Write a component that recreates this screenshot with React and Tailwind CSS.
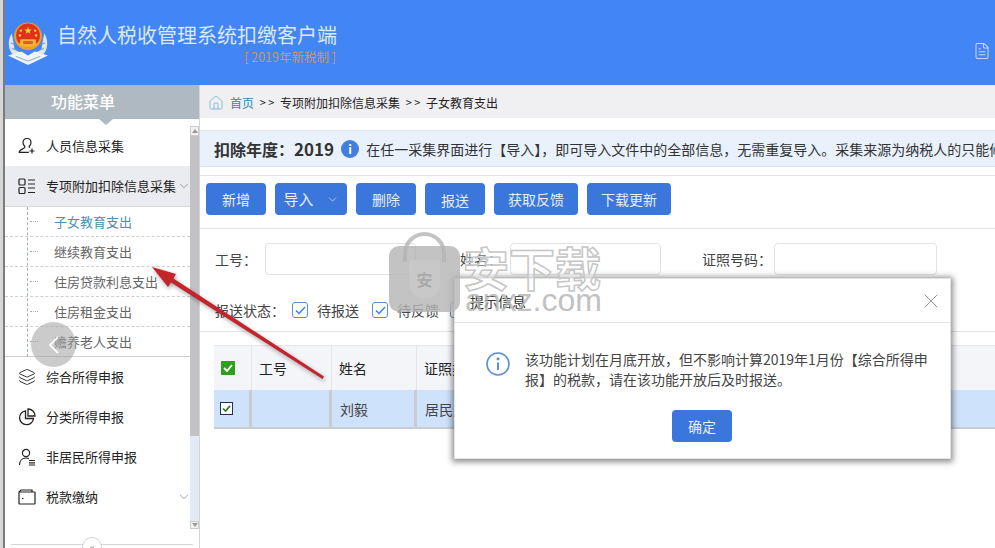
import React from "react";
import { Home, FileText, ChevronDown, Layers, X } from "lucide-react";

function Emblem() {
  return (
    <svg width="40" height="44" viewBox="0 0 42 46" className="shrink-0">
      <path d="M4 13 C-1 20 0 31 6 36 L13 39 L21 41 L29 39 L36 36 C42 31 43 20 38 13 L35 30 L21 37 L7 30 Z" fill="#dfe6ee" />
      <g stroke="#7f93ad" strokeWidth="1" fill="none">
        <path d="M5 17 l4 3 M3 23 l5 2 M4 29 l5 1 M37 17 l-4 3 M39 23 l-5 2 M38 29 l-5 1" />
      </g>
      <path d="M0 36 L14 32 L21 36 L28 32 L42 36 L21 46 Z" fill="#f0f4f9" />
      <path d="M8 37 L21 42 L34 37" stroke="#8ea3bf" strokeWidth="1" fill="none" />
      <circle cx="21" cy="16" r="14.5" fill="#f0a020" />
      <circle cx="21" cy="15" r="12.5" fill="#e0301e" />
      <path d="M21 6 l1 2.8 3 0 -2.4 1.8 .9 2.8 -2.5 -1.7 -2.5 1.7 .9 -2.8 -2.4 -1.8 3 0 Z" fill="#fbd92f" />
      <g fill="#fbd92f">
        <circle cx="13.5" cy="10" r="1.3" />
        <circle cx="12.5" cy="15" r="1.3" />
        <circle cx="28.5" cy="10" r="1.3" />
        <circle cx="29.5" cy="15" r="1.3" />
      </g>
      <path d="M13 19 h16 l1 6 q-9 5 -18 0 Z" fill="#f5b335" />
      <path d="M16 21 h10 v3 h-10 Z" fill="#d8601f" />
    </svg>
  );
}

function IconUserPlus() {
  return (
    <svg width="18" height="18" viewBox="0 0 18 18" fill="none" stroke="#222" strokeWidth="1.2">
      <path d="M9 1.5 c-2.6 0 -4 1.9 -4 4 c0 1.8 .8 3 1.8 3.8 c.3 1 -.3 1.7 -1.5 2.2 c-2 .8 -4 1.5 -4 3.8 h9.5" />
      <path d="M9 1.5 c2.6 0 4 1.9 4 4 c0 1.8 -.8 3 -1.8 3.8 c-.2 .7 0 1.2 .5 1.6" />
      <path d="M14 11.5 v5 M11.5 14 h5" />
    </svg>
  );
}
function IconList() {
  return (
    <svg width="18" height="18" viewBox="0 0 18 18" fill="none" stroke="#222" strokeWidth="1.2">
      <rect x="1" y="2" width="6" height="6" rx="1" />
      <rect x="1" y="10.5" width="6" height="6" rx="1" />
      <path d="M10 3h7M10 7h7M10 11h7M10 15.5h7" />
    </svg>
  );
}
function IconPie() {
  return (
    <svg width="18" height="18" viewBox="0 0 18 18" fill="none" stroke="#222" strokeWidth="1.3">
      <path d="M7.5 2.8 A7 7 0 1 0 15.5 10.5 H7.5 Z" />
      <path d="M10 1 A7 7 0 0 1 17 8 H10 Z" />
    </svg>
  );
}
function IconUserLines() {
  return (
    <svg width="18" height="18" viewBox="0 0 18 18" fill="none" stroke="#222" strokeWidth="1.2">
      <circle cx="8" cy="5" r="3.6" />
      <path d="M1.5 17 c0 -4.5 3 -7 6.5 -7 c1 0 2 .2 2.8 .6" />
      <path d="M11 12.5h6M11 14.8h6M11 17h6" />
    </svg>
  );
}
function IconWallet() {
  return (
    <svg width="18" height="16" viewBox="0 0 18 16" fill="none" stroke="#222" strokeWidth="1.2">
      <path d="M1 3 L3 1 H14 V3" />
      <rect x="1" y="3" width="16" height="12" rx="0.5" />
      <path d="M4 9.5 h1.5" />
    </svg>
  );
}

function MenuItem({ icon, label, chevron, active }) {
  return (
    <div className={`h-10 flex items-center pl-[13px] text-[13px] text-[#222] relative ${active ? "bg-[#ebecf0]" : ""}`}>
      <span className="w-[28px] flex items-center">{icon}</span>
      <span className="whitespace-nowrap">{label}</span>
      {chevron && <ChevronDown className="absolute -right-[1px] text-[#777]" size={14} strokeWidth={1.2} />}
    </div>
  );
}

function SubItem({ label, active, last }) {
  return (
    <div className={`h-[30px] flex items-center text-[13px] border-b border-[#cfcfcf] ${last ? "border-solid" : "border-dashed"} ${active ? "text-[#4b8fb3]" : "text-[#666]"}`}>
      <span className="w-[8px] ml-[25px] mr-[16px] border-t border-dotted border-[#aaa]" />
      {label}
    </div>
  );
}

function Btn({ children, w, caret, cls = "" }) {
  return (
    <button className={`h-8 rounded-[4px] bg-[#3a76db] text-[#e8effb] text-sm flex items-center justify-center gap-3 ${w} ${cls}`}>
      {children}
      {caret && <ChevronDown size={13} strokeWidth={1.2} />}
    </button>
  );
}

function Check() {
  return (
    <span className="w-4 h-4 rounded-[3px] border border-[#5b8fd0] bg-white flex items-center justify-center">
      <svg width="11" height="9" viewBox="0 0 11 9" fill="none" stroke="#3f7fd8" strokeWidth="1.4"><path d="M1 4.5 L4 7.5 L10 1" /></svg>
    </span>
  );
}

export default function App() {
  return (
    <div className="w-[995px] h-[548px] border-l-[3px] border-l-[#d6d6d6] overflow-hidden">
      <div className="relative w-[992px] h-[548px] overflow-hidden bg-white flex flex-col [font-family:'Noto_Sans_CJK_SC','Liberation_Sans',sans-serif] text-[#333] border-l-2 border-l-[#7c7c7c]">
        {/* header */}
        <header className="h-[85px] shrink-0 bg-[#4285f4] flex items-center pl-[3px] pr-1 relative">
          <Emblem />
          <div className="ml-[9px] flex flex-col -mt-[1px]">
            <div className="text-[20px] leading-[28px] text-[#dbe8fd] whitespace-nowrap">自然人税收管理系统扣缴客户端</div>
            <div className="text-[12.5px] leading-[15px] text-[#c9995e] text-right pr-[1px]">[ 2019年新税制 ]</div>
          </div>
          <FileText className="ml-auto mt-[17px] text-[#c3d9fb]" size={18} strokeWidth={1.4} />
        </header>

        <div className="flex-1 flex min-h-0">
          {/* sidebar */}
          <aside className="w-[195px] shrink-0 flex flex-col border-r border-[#d5d5d5] relative">
            <div className="h-[34px] shrink-0 bg-[#aeb9c1] text-white text-base font-medium flex items-center pl-[46px] pb-[2px] relative">
              功能菜单
              <span className="absolute left-[94px] -bottom-[6px] w-0 h-0 border-x-[7px] border-x-transparent border-t-[6px] border-t-[#aeb9c1]" />
            </div>
            <div className="flex-1 flex min-h-0 pt-[7px]">
              <div className="w-[185px] shrink-0">
                <MenuItem icon={<IconUserPlus />} label="人员信息采集" />
                <MenuItem icon={<IconList />} label="专项附加扣除信息采集" chevron active />
                <div className="relative border-t border-[#d8d8d8]">
                  <span className="absolute left-[22px] top-0 bottom-0 border-l border-dashed border-[#9fb0c0]" />
                  <SubItem label="子女教育支出" active />
                  <SubItem label="继续教育支出" />
                  <SubItem label="住房贷款利息支出" />
                  <SubItem label="住房租金支出" />
                  <SubItem label="赡养老人支出" last />
                </div>
                <MenuItem icon={<Layers size={18} strokeWidth={1.2} color="#222" />} label="综合所得申报" />
                <MenuItem icon={<IconPie />} label="分类所得申报" />
                <MenuItem icon={<IconUserLines />} label="非居民所得申报" />
                <MenuItem icon={<IconWallet />} label="税款缴纳" chevron />
              </div>
              <div className="w-[9px] h-[403px] shrink-0 flex flex-col bg-[#e3e9f5]">
                <div className="h-[10px] bg-[#f1f1f1] border border-[#ccc] flex items-center justify-center">
                  <span className="w-0 h-0 border-x-[3px] border-x-transparent border-b-[4px] border-b-[#999]" />
                </div>
                <div className="h-[300px] bg-[#c2c2c6]" />
                <div className="flex-1" />
                <div className="h-[8px] bg-[#f1f1f1] border border-[#ccc] flex items-center justify-center">
                  <span className="w-0 h-0 border-x-[3px] border-x-transparent border-t-[4px] border-t-[#999]" />
                </div>
              </div>
            </div>
            <div className="absolute left-[6px] right-[6px] top-[459px] border-t border-[#d5d5d5]" />
            <div className="absolute left-[77px] top-[452px] w-5 h-5 rounded-full bg-white border border-[#d5d5d5] text-[#999] text-xs flex items-center justify-center leading-none">«</div>
          </aside>

          {/* main */}
          <main className="flex-1 min-w-0 overflow-hidden flex flex-col">
            <div className="h-[33px] shrink-0 bg-[#f0eff2] flex items-center pl-2 pt-[1px] text-xs text-[#222] whitespace-nowrap border-t border-[#e3eefb]">
              <Home size={16} strokeWidth={1} className="text-[#5ba3c9] mr-[6px]" />
              <span className="text-[#2e8ba6]">首页</span>
              <span className="mx-[5px] w-[16px] text-center text-[11px]">&gt; &gt;</span>
              <span>专项附加扣除信息采集</span>
              <span className="mx-[5px] w-[16px] text-center text-[11px]">&gt; &gt;</span>
              <span>子女教育支出</span>
            </div>
            <div className="h-[37px] mt-3 shrink-0 bg-[#e8f1fc] border-y border-[#dbe3ec] flex items-center pl-[14px] whitespace-nowrap">
              <span className="text-base font-bold text-[#333]">扣除年度：<span className="text-[17px]">2019</span></span>
              <span className="ml-[7px] w-[18px] h-[18px] rounded-full bg-[#3f7fe0] text-white text-xs font-bold flex items-center justify-center shrink-0">i</span>
              <span className="ml-[7px] text-sm text-[#333]">在任一采集界面进行【导入】，即可导入文件中的全部信息，无需重复导入。采集来源为纳税人的只能修改</span>
            </div>
            <div className="mt-2 h-[54px] shrink-0 border-y border-[#e2e2e2] flex gap-[9px] pl-[6px] pt-[7px]">
              <Btn w="w-[60px]">新增</Btn>
              <Btn w="w-[72px]" caret cls="text-[15px]">导入</Btn>
              <Btn w="w-[60px]">删除</Btn>
              <Btn w="w-[60px]" cls="pt-[2px]">报送</Btn>
              <Btn w="w-[84px]">获取反馈</Btn>
              <Btn w="w-[84px]">下载更新</Btn>
            </div>
            <div className="mt-[14px] h-8 shrink-0 flex items-center text-sm text-[#444] whitespace-nowrap">
              <span className="ml-[15px] w-[50px]">工号：</span>
              <span className="w-[151px] h-8 rounded-[4px] border border-[#e2e2e2]" />
              <span className="ml-[44px] w-[50px]">姓名：</span>
              <span className="w-[151px] h-8 rounded-[4px] border border-[#e2e2e2]" />
              <span className="ml-[41px] w-[72px]">证照号码：</span>
              <span className="w-[163px] h-8 rounded-[4px] border border-[#e2e2e2]" />
            </div>
            <div className="mt-[25px] h-5 shrink-0 flex items-center text-sm text-[#444] whitespace-nowrap">
              <span className="ml-[15px] w-[77px]">报送状态：</span>
              <Check />
              <span className="ml-[9px]">待报送</span>
              <span className="ml-[13px]"><Check /></span>
              <span className="ml-[9px]">待反馈</span>
              <span className="ml-[11px]"><Check /></span>
            </div>
            <div className="mt-[11px] shrink-0 border-t border-[#e2e2e2] pt-[13px] pl-[14px]">
              <div className="w-[900px] text-sm text-[#222]">
                <div className="h-[45px] grid grid-cols-[38px_80px_85px_1fr] bg-[#f4f5f9] border-t border-[#e6e6ea]">
                  <div className="flex items-center pl-[7px] border-r border-[#e6e6ea]">
                    <span className="w-[14px] h-[14px] bg-[#2ea01e] flex items-center justify-center">
                      <svg width="10" height="8" viewBox="0 0 10 8" fill="none" stroke="#fff" strokeWidth="1.8"><path d="M1 4 L4 7 L9 1" /></svg>
                    </span>
                  </div>
                  <div className="flex items-center pl-[7px] border-r border-[#e6e6ea]">工号</div>
                  <div className="flex items-center pl-[7px] border-r border-[#e6e6ea]">姓名</div>
                  <div className="flex items-center pl-[7px]">证照类型</div>
                </div>
                <div className="h-[39px] grid grid-cols-[38px_80px_85px_1fr] bg-[#cfe2fb] border-b-2 border-[#c9cdd2] text-[#444]">
                  <div className="flex items-center pl-[6px] border-r-[3px] border-[#c9cdd2]">
                    <span className="w-[13px] h-[13px] bg-white border border-[#1f2f55] flex items-center justify-center">
                      <svg width="9" height="7" viewBox="0 0 10 8" fill="none" stroke="#2a7a20" strokeWidth="1.8"><path d="M1 4 L4 7 L9 1" /></svg>
                    </span>
                  </div>
                  <div className="border-r-[3px] border-[#c9cdd2]" />
                  <div className="flex items-center pl-[8px] border-r-[3px] border-[#c9cdd2]">刘毅</div>
                  <div className="flex items-center pl-[8px]">居民身份证</div>
                </div>
              </div>
            </div>
          </main>
        </div>

        {/* dialog */}
        <div className="absolute left-[449px] top-[278px] w-[497px] h-[181px] bg-white border border-[#e2e2e2] shadow-[0_1px_6px_2px_rgba(0,0,0,0.45)] flex flex-col z-10">
          <div className="h-[44px] shrink-0 border-b border-[#e4e4e4] flex items-center justify-between pl-[15px] pr-[7px] text-sm text-[#333]">
            <span>提示信息</span>
            <X size={24} strokeWidth={0.9} className="text-[#888]" />
          </div>
          <div className="flex pt-[26px] pl-[31px]">
            <svg width="24" height="24" viewBox="0 0 24 24" fill="none" stroke="#5b8fd6" strokeWidth="1.6" className="shrink-0 mt-[3px]">
              <circle cx="12" cy="12" r="11" />
              <path d="M12 10.5 V18" strokeWidth="2" />
              <circle cx="12" cy="6.8" r="0.7" fill="#5b8fd6" />
            </svg>
            <div className="ml-[15px] text-sm leading-[20px] text-[#444] whitespace-nowrap">
              该功能计划在月底开放，但不影响计算2019年1月份【综合所得申<br />报】的税款，请在该功能开放后及时报送。
            </div>
          </div>
          <div className="flex justify-center mt-[21px] pr-[1px]">
            <button className="w-[60px] h-8 rounded-[4px] bg-[#3a76db] text-[#e8effb] text-sm">确定</button>
          </div>
        </div>

        {/* watermark */}
        <div className="absolute left-[384px] top-[232px] w-[71px] h-[80px] z-20 pointer-events-none">
          <span className="absolute left-[14px] top-0 w-[43px] h-[30px] rounded-t-[22px] border-[4px] border-b-0 border-[#b4b4b4]/80" />
          <div className="absolute left-0 top-[14px] w-[71px] h-[66px] rounded-[10px] bg-[#b4b4b4]/80 flex items-center justify-center">
            <span className="w-[31px] h-[38px] rounded-b-[14px] rounded-t-[4px] bg-[#c8c8c8] text-[#aaa] text-[16px] font-bold flex items-center justify-center">安</span>
          </div>
        </div>
        <div className="absolute left-[458px] top-[238px] z-20 pointer-events-none text-[46px] leading-[56px] font-bold text-white/40 [-webkit-text-stroke:1.5px_#c6c6c6] whitespace-nowrap">安下载</div>
        <div className="absolute left-[460px] top-[280px] z-20 pointer-events-none text-[32px] leading-[40px] text-[#b0b0b0]/80 [font-family:'Liberation_Sans',sans-serif] whitespace-nowrap">anxz.com</div>

        {/* back circle */}
        <div className="absolute left-[26px] top-[322px] w-[45px] h-[45px] rounded-full bg-[#a0a0a0]/55 z-20 flex items-center justify-center">
          <svg width="12" height="20" viewBox="0 0 12 20" fill="none" stroke="#fff" strokeWidth="1.8"><path d="M10 2 L2 10 L10 18" /></svg>
        </div>

        {/* red annotation arrow */}
        <svg className="absolute left-[140px] top-[260px] z-20 pointer-events-none drop-shadow-[1px_2px_2px_rgba(0,0,0,0.35)]" width="200" height="125" viewBox="0 0 200 125" fill="none">
          <path d="M7 7 L31 14 L28.5 18.5 L179 116.5 L177.5 119 L26 22.5 L23 27 Z" fill="#c4242b" />
        </svg>
      </div>
    </div>
  );
}
